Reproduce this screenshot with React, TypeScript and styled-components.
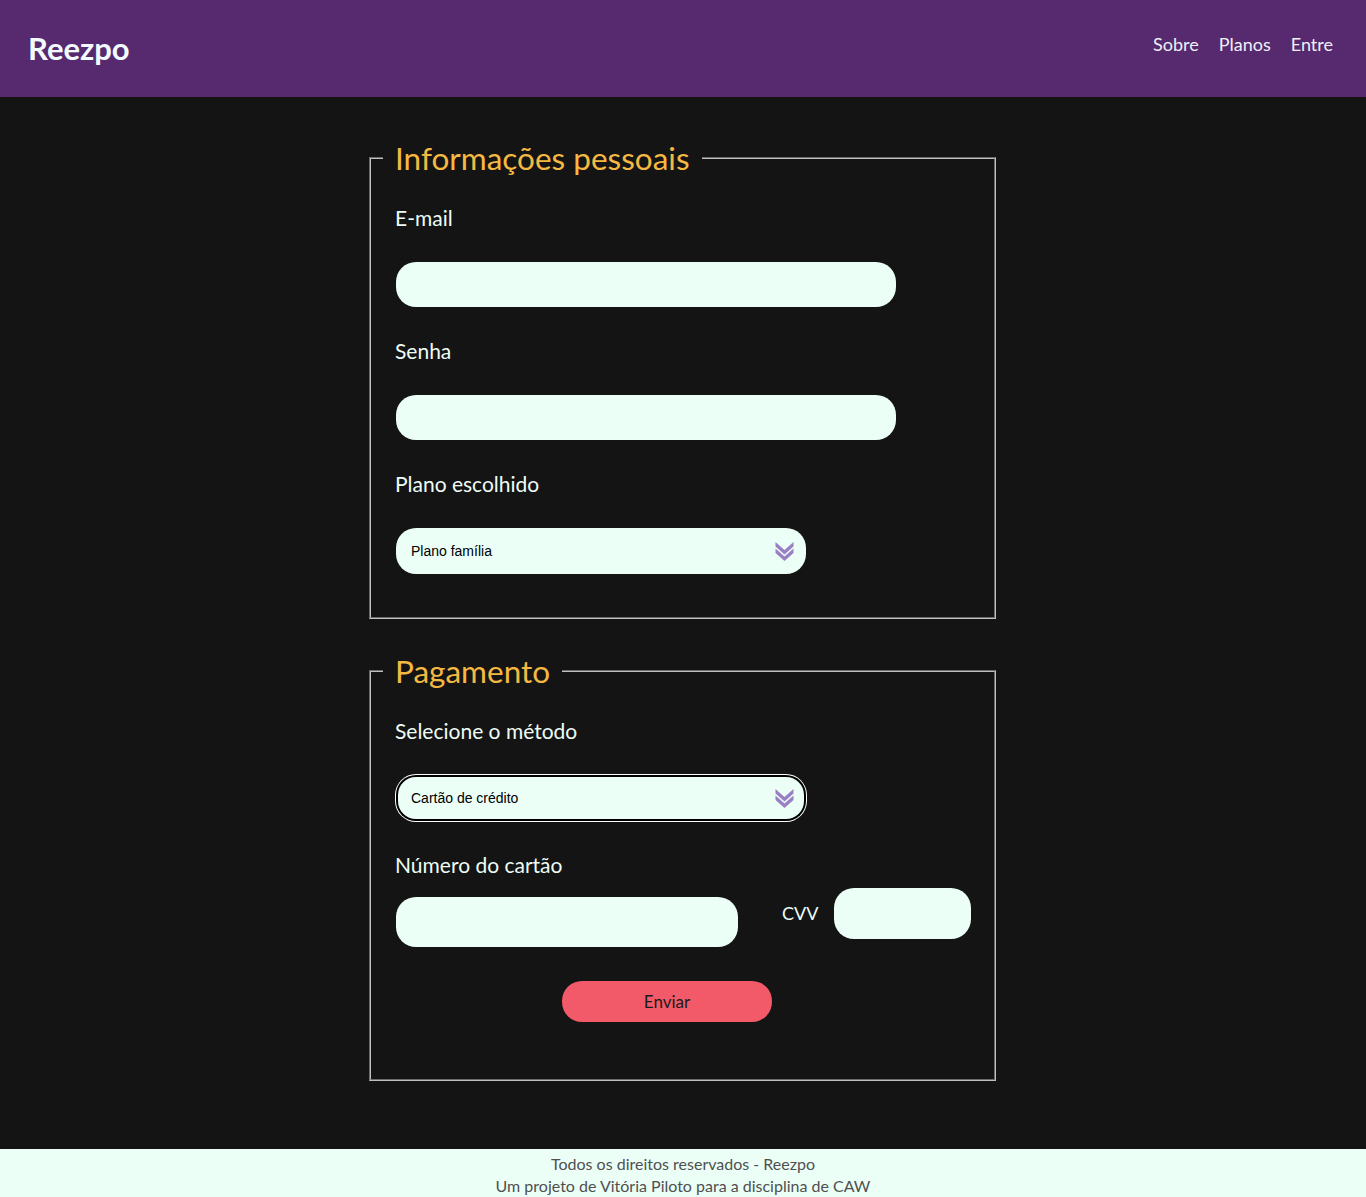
import React from "react";
import styled, { createGlobalStyle } from "styled-components";

const GlobalStyle = createGlobalStyle`
  html, body { margin: 0; padding: 0; }
  body {
    background: #141414;
    font-family: Lato, "Noto Sans", sans-serif;
  }
  * { box-sizing: border-box; }
`;

const Page = styled.div`
  min-height: 100vh;
  display: flex;
  flex-direction: column;
`;

const Header = styled.header`
  height: 97px;
  background: #57296f;
  display: flex;
  align-items: center;
  justify-content: space-between;
  padding: 0 33px 0 28px;
`;

const Logo = styled.a`
  color: #f2fbff;
  font-size: 31px;
  font-weight: 700;
  text-decoration: none;
  margin-top: -2px;
`;

const Nav = styled.nav`
  display: flex;
  gap: 20px;
  margin-top: -10px;
`;

const NavLink = styled.a`
  color: #eef0f6;
  font-size: 18px;
  text-decoration: none;
`;

const Main = styled.main`
  flex: 1;
  padding: 41px 0 68px;
`;

const Fieldset = styled.fieldset<{ $gap?: number; $bottom: number }>`
  width: 627px;
  margin: ${(p) => p.$gap ?? 0}px 0 0 calc(50% - 314px);
  border: 2px groove #c0c0c0;
  padding: 28px 24px ${(p) => p.$bottom}px;
  min-width: 0;
`;

const Legend = styled.legend`
  color: #f4b942;
  font-size: 31.5px;
  line-height: 40px;
  padding: 0 12px;
  margin-left: -12px;
`;

const Label = styled.label<{ $mb?: number }>`
  display: block;
  color: #eefcf6;
  font-size: 21px;
  line-height: 24px;
  margin-bottom: ${(p) => p.$mb ?? 32}px;
`;

const TextInput = styled.input<{ $w: number; $h: number; $mt?: number }>`
  display: block;
  flex-shrink: 0;
  width: ${(p) => p.$w}px;
  height: ${(p) => p.$h}px;
  margin: ${(p) => p.$mt ?? 0}px 0 32px 1px;
  border: none;
  border-radius: 20px;
  background: #ebfff7;
  outline: none;
  padding: 0 16px;
  font-size: 14px;
  font-family: "Liberation Sans", Arial, sans-serif;
`;

const SelectWrap = styled.div<{ $focused?: boolean; $mb?: number }>`
  position: relative;
  width: 410px;
  height: 46px;
  margin: 0 0 ${(p) => p.$mb ?? 32}px 1px;
  border-radius: 20px;
  background: #ebfff7;
  ${(p) =>
    p.$focused
      ? `box-shadow: inset 0 0 0 2px #000, 0 0 0 1px #fff;`
      : ""}
`;

const Select = styled.select`
  appearance: none;
  -webkit-appearance: none;
  width: 100%;
  height: 100%;
  border: none;
  background: transparent;
  border-radius: 20px;
  padding: 0 40px 0 15px;
  font-family: "Liberation Sans", Arial, sans-serif;
  font-size: 14px;
  color: #000;
  outline: none;
`;

const Chevron = styled.svg`
  position: absolute;
  right: 11px;
  top: 13px;
  width: 21px;
  height: 20px;
  pointer-events: none;
`;

const CardRow = styled.div`
  display: flex;
  align-items: flex-start;
  margin-top: -21px;
`;

const CvvLabel = styled.label`
  color: #eefcf6;
  font-size: 18px;
  line-height: 24px;
  margin: 13px 15px 0 44px;
`;

const SubmitButton = styled.button`
  display: block;
  width: 210px;
  height: 41px;
  margin: 2px 0 0 167px;
  border: none;
  border-radius: 20px;
  background: #f25a6a;
  color: #1a1a1a;
  font-family: Lato, sans-serif;
  font-size: 17px;
  cursor: pointer;
`;

const Footer = styled.footer`
  background: #ebfff7;
  color: #505050;
  text-align: center;
  font-size: 16px;
  line-height: 22px;
  padding: 4px 0 4px;
`;

const ChevronIcon = () => (
  <Chevron viewBox="0 0 20 20">
    <path d="M1 1 L10 9 L19 1 L19 5.5 L10 13.5 L1 5.5 Z" fill="#9b7fc4" />
    <path d="M1 7.5 L10 15.5 L19 7.5 L19 12 L10 20 L1 12 Z" fill="#9b7fc4" />
  </Chevron>
);

export default function App() {
  return (
    <>
      <GlobalStyle />
      <Page>
        <Header>
          <Logo href="#">Reezpo</Logo>
          <Nav>
            <NavLink href="#">Sobre</NavLink>
            <NavLink href="#">Planos</NavLink>
            <NavLink href="#">Entre</NavLink>
          </Nav>
        </Header>
        <Main>
          <form onSubmit={(e) => e.preventDefault()}>
            <Fieldset $bottom={43}>
              <Legend>Informações pessoais</Legend>
              <Label htmlFor="email">E-mail</Label>
              <TextInput id="email" type="email" $w={500} $h={45} />
              <Label htmlFor="senha">Senha</Label>
              <TextInput id="senha" type="password" $w={500} $h={45} />
              <Label htmlFor="plano">Plano escolhido</Label>
              <SelectWrap $mb={0}>
                <Select id="plano" defaultValue="familia">
                  <option value="familia">Plano família</option>
                  <option value="individual">Plano individual</option>
                </Select>
                <ChevronIcon />
              </SelectWrap>
            </Fieldset>
            <Fieldset $gap={32} $bottom={57}>
              <Legend>Pagamento</Legend>
              <Label htmlFor="metodo">Selecione o método</Label>
              <SelectWrap $focused>
                <Select id="metodo" defaultValue="credito">
                  <option value="credito">Cartão de crédito</option>
                  <option value="debito">Cartão de débito</option>
                </Select>
                <ChevronIcon />
              </SelectWrap>
              <Label htmlFor="numero">Número do cartão</Label>
              <CardRow>
                <TextInput id="numero" $w={342} $h={50} $mt={9} />
                <CvvLabel htmlFor="cvv">CVV</CvvLabel>
                <TextInput id="cvv" $w={137} $h={51} />
              </CardRow>
              <SubmitButton type="submit">Enviar</SubmitButton>
            </Fieldset>
          </form>
        </Main>
        <Footer>
          <div>Todos os direitos reservados - Reezpo</div>
          <div>Um projeto de Vitória Piloto para a disciplina de CAW</div>
        </Footer>
      </Page>
    </>
  );
}
